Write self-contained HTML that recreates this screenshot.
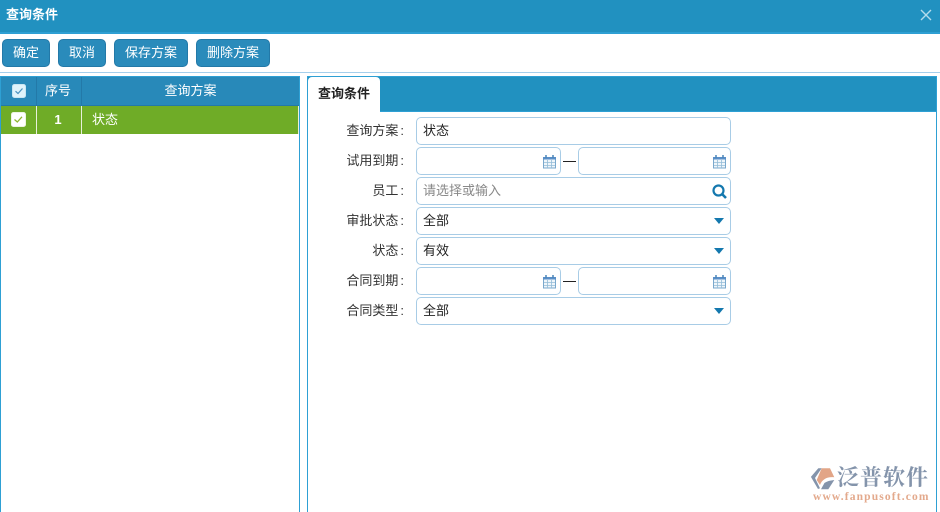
<!DOCTYPE html>
<html><head><meta charset="utf-8">
<style>
*{box-sizing:border-box}
html,body{margin:0;padding:0;width:940px;height:512px;overflow:hidden;background:#fff;
font-family:"Liberation Sans","Noto Sans CJK SC",sans-serif;font-size:13px;color:#222}
.a{position:absolute}
.btn{position:absolute;top:39px;height:28px;background:#2a8bbb;border:1px solid #2379a8;border-radius:5px;color:#fff;text-align:center;line-height:26px;font-size:13px}
.lab{position:absolute;left:320px;width:84px;text-align:right;height:28px;line-height:28px;font-size:13px;color:#333;white-space:nowrap}
.lab i{font-style:normal;margin-left:2px}
.f{position:absolute;height:28px;border:1px solid #a8cce6;border-radius:5px;background:#fff;line-height:26px;padding-left:6px;font-size:13px;color:#222}
.cal{position:absolute;width:13px;height:14px}
.arr{position:absolute;left:714px;width:0;height:0;border-left:5.5px solid transparent;border-right:5.5px solid transparent;border-top:6px solid #1478ae}
.dash{position:absolute;left:563px;width:13px;height:1px;background:#222}
</style></head><body>
<div class="a" style="left:0;top:0;width:940px;height:32px;background:#2191c0"></div>
<div class="a" style="left:0;top:32px;width:940px;height:2px;background:#2e9fd3"></div>
<div class="a" style="left:6px;top:5px;color:#fff;font-weight:bold;font-size:13px;line-height:20px">查询条件</div>
<svg class="a" style="left:920px;top:9px" width="12" height="12" viewBox="0 0 12 12"><path d="M1 1L11 11M11 1L1 11" stroke="#b4dcec" stroke-width="1.4" fill="none"/></svg>

<div class="btn" style="left:2px;width:48px">确定</div>
<div class="btn" style="left:58px;width:48px">取消</div>
<div class="btn" style="left:114px;width:74px">保存方案</div>
<div class="btn" style="left:196px;width:74px">删除方案</div>
<div class="a" style="left:0;top:72px;width:940px;height:1px;background:#a5cfec"></div>

<!-- left grid -->
<div class="a" style="left:0;top:76px;width:300px;height:436px;border:1px solid #2ea0d4;border-bottom:0"></div>
<div class="a" style="left:1px;top:77px;width:298px;height:28px;background:#2889b9"></div>
<div class="a" style="left:36px;top:77px;width:1px;height:28px;background:#2379a8"></div>
<div class="a" style="left:81px;top:77px;width:1px;height:28px;background:#2379a8"></div>
<div class="a" style="left:1px;top:105px;width:298px;height:1px;background:#2379a8"></div>
<div class="a" style="left:1px;top:106px;width:298px;height:28px;background:#6fac27"></div>
<div class="a" style="left:36px;top:106px;width:1px;height:28px;background:#e8f0dc"></div>
<div class="a" style="left:81px;top:106px;width:1px;height:28px;background:#e8f0dc"></div>
<div class="a" style="left:298px;top:106px;width:1px;height:28px;background:#e8f0dc"></div>
<svg class="a" style="left:12px;top:84px" width="14" height="14" viewBox="0 0 14 14"><rect x=".5" y=".5" width="13" height="13" rx="2" fill="#dff3fb" stroke="#c8e6f3"/><path d="M3.5 7.2L6 9.5L10.5 4.5" stroke="#4a92c0" stroke-width="1.2" fill="none"/></svg>
<svg class="a" style="left:11px;top:112px" width="15" height="15" viewBox="0 0 15 15"><rect x=".5" y=".5" width="14" height="14" rx="2" fill="#fff" stroke="#eef3e2"/><path d="M3.5 7.5L6.3 10L11 4.8" stroke="#8fb52f" stroke-width="1.3" fill="none"/></svg>
<div class="a" style="left:36px;top:81px;width:44px;text-align:center;color:#fff;line-height:20px">序号</div>
<div class="a" style="left:82px;top:81px;width:217px;text-align:center;color:#fff;line-height:20px">查询方案</div>
<div class="a" style="left:36px;top:110px;width:44px;text-align:center;color:#fff;line-height:20px;font-weight:bold;font-size:13px">1</div>
<div class="a" style="left:92px;top:110px;color:#fff;line-height:20px">状态</div>

<!-- right panel -->
<div class="a" style="left:307px;top:76px;width:630px;height:436px;border:1px solid #2ea0d4;border-bottom:0"></div>
<div class="a" style="left:308px;top:77px;width:628px;height:34px;background:#2191c0"></div>
<div class="a" style="left:308px;top:111px;width:628px;height:1px;background:#2ea0d4"></div>
<div class="a" style="left:308px;top:77px;width:72px;height:35px;background:#fff;border-radius:4px 4px 0 0"></div>
<div class="a" style="left:318px;top:84px;font-weight:bold;color:#222;line-height:20px;font-size:13px">查询条件</div>

<div class="lab" style="top:117px">查询方案<i>:</i></div>
<div class="f" style="left:416px;top:117px;width:315px">状态</div>

<div class="lab" style="top:147px">试用到期<i>:</i></div>
<div class="f" style="left:416px;top:147px;width:145px"></div>
<div class="dash" style="top:161px"></div>
<div class="f" style="left:578px;top:147px;width:153px"></div>

<div class="lab" style="top:177px">员工<i>:</i></div>
<div class="f" style="left:416px;top:177px;width:315px;color:#888">请选择或输入</div>
<svg class="a" style="left:712px;top:184px" width="15" height="15" viewBox="0 0 15 15"><circle cx="6.5" cy="6.5" r="5" fill="none" stroke="#1478ae" stroke-width="2.2"/><path d="M10 10L14 14" stroke="#1478ae" stroke-width="2.6" fill="none"/></svg>

<div class="lab" style="top:207px">审批状态<i>:</i></div>
<div class="f" style="left:416px;top:207px;width:315px">全部</div>
<div class="arr" style="top:218px"></div>

<div class="lab" style="top:237px">状态<i>:</i></div>
<div class="f" style="left:416px;top:237px;width:315px">有效</div>
<div class="arr" style="top:248px"></div>

<div class="lab" style="top:267px">合同到期<i>:</i></div>
<div class="f" style="left:416px;top:267px;width:145px"></div>
<div class="dash" style="top:281px"></div>
<div class="f" style="left:578px;top:267px;width:153px"></div>

<div class="lab" style="top:297px">合同类型<i>:</i></div>
<div class="f" style="left:416px;top:297px;width:315px">全部</div>
<div class="arr" style="top:308px"></div>

<svg class="cal" style="left:543px;top:155px" viewBox="0 0 13 14"><rect x=".5" y="2.5" width="12" height="10.5" fill="#eef5fa" stroke="#7aa8cc"/><rect x="0" y="2" width="13" height="2.5" fill="#5a8fc8"/><path d="M3 0v3M10 0v3" stroke="#4a86b8" stroke-width="1.5"/><path d="M4.5 5v8M8.5 5v8M1 7.5h11M1 10.5h11" stroke="#93bcd8" stroke-width=".8"/></svg>
<svg class="cal" style="left:713px;top:155px" viewBox="0 0 13 14"><rect x=".5" y="2.5" width="12" height="10.5" fill="#eef5fa" stroke="#7aa8cc"/><rect x="0" y="2" width="13" height="2.5" fill="#5a8fc8"/><path d="M3 0v3M10 0v3" stroke="#4a86b8" stroke-width="1.5"/><path d="M4.5 5v8M8.5 5v8M1 7.5h11M1 10.5h11" stroke="#93bcd8" stroke-width=".8"/></svg>
<svg class="cal" style="left:543px;top:275px" viewBox="0 0 13 14"><rect x=".5" y="2.5" width="12" height="10.5" fill="#eef5fa" stroke="#7aa8cc"/><rect x="0" y="2" width="13" height="2.5" fill="#5a8fc8"/><path d="M3 0v3M10 0v3" stroke="#4a86b8" stroke-width="1.5"/><path d="M4.5 5v8M8.5 5v8M1 7.5h11M1 10.5h11" stroke="#93bcd8" stroke-width=".8"/></svg>
<svg class="cal" style="left:713px;top:275px" viewBox="0 0 13 14"><rect x=".5" y="2.5" width="12" height="10.5" fill="#eef5fa" stroke="#7aa8cc"/><rect x="0" y="2" width="13" height="2.5" fill="#5a8fc8"/><path d="M3 0v3M10 0v3" stroke="#4a86b8" stroke-width="1.5"/><path d="M4.5 5v8M8.5 5v8M1 7.5h11M1 10.5h11" stroke="#93bcd8" stroke-width=".8"/></svg>

<!-- logo -->
<svg class="a" style="left:810px;top:467px" width="26" height="24" viewBox="810 467 26 24"><path d="M811 476.7L818.3 468.3H821.7L815 478L820 488.3L818 489L811 477Z" fill="#8494ab"/><path d="M821.7 468.3H830L834.3 477.3C827 476.5 822 479.5 820 485L816.7 480Z" fill="#e2a587"/><path d="M834.3 480L828.3 489.3H821L824.3 483.3C826 481.5 830 480.5 834.3 480Z" fill="#8494ab"/></svg>
<div class="a" style="left:837px;top:465px;font-family:'Liberation Sans','Noto Serif CJK SC',serif;font-weight:bold;font-size:22px;line-height:26px;color:#8494ab;letter-spacing:1px;white-space:nowrap">泛普软件</div>
<div class="a" style="left:813px;top:491px;font-family:'Liberation Serif',serif;font-weight:bold;font-size:11.5px;line-height:12px;color:#e3a98c;letter-spacing:1.15px;white-space:nowrap">www.fanpusoft.com</div>
</body></html>
